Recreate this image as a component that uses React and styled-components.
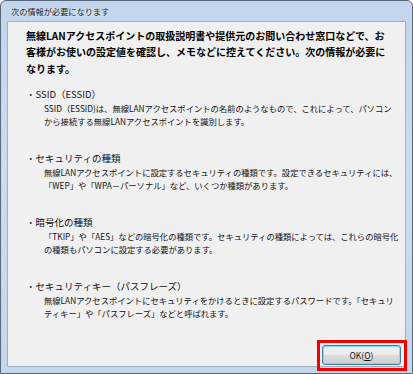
import React from "react";
import styled, { createGlobalStyle } from "styled-components";

const Global = createGlobalStyle`
  html, body {
    margin: 0;
    padding: 0;
    width: 413px;
    height: 374px;
    overflow: hidden;
    background: #ffffff;
    font-family: "Noto Sans CJK JP", "Noto Sans", sans-serif;
  }
`;

const Window = styled.div`
  box-sizing: border-box;
  width: 413px;
  height: 374px;
  border: 1px solid #56677c;
  border-radius: 6px 6px 0 0;
  background: linear-gradient(180deg, #c2d5ec 0%, #cddcee 45%, #c6d6ea 100%);
  display: flex;
  flex-direction: column;
  padding: 0 6px 6px 6px;
`;

const TitleBar = styled.div`
  height: 20px;
  display: flex;
  align-items: center;
  padding-left: 4px;
  font-size: 8.2px;
  color: #1a1a1a;
  text-shadow: 0 0 3px rgba(255, 255, 255, 0.9);
`;

const Panel = styled.div`
  flex: 1;
  box-sizing: border-box;
  border: 1px solid #a2b2c5;
  background: #f0f0f0;
  display: flex;
  flex-direction: column;
  padding: 5.5px 4px 1px 18px;
  color: #111;
`;

const Heading = styled.p`
  margin: 0 0 11px 0;
  font-size: 10px;
  font-weight: 700;
  line-height: 16.5px;
  white-space: nowrap;
  color: #000;
`;

const SectionList = styled.div`
  display: flex;
  flex-direction: column;
  gap: 25px;
`;

const Section = styled.section`
  display: flex;
  flex-direction: column;
`;

const SectionTitle = styled.div`
  display: flex;
  font-size: 9.5px;
  line-height: 13px;
  margin-bottom: 1px;
  white-space: nowrap;
  color: #111;
`;

const Bullet = styled.span`
  width: 9px;
  margin-right: 0.5px;
  color: #444;
`;

const Body = styled.p`
  margin: 0 0 0 18px;
  font-size: 8.3px;
  line-height: 12.5px;
  white-space: nowrap;
  color: #111;
`;

const Footer = styled.div`
  margin-top: auto;
  display: flex;
  justify-content: flex-end;
`;

const Highlight = styled.div`
  position: relative;
  display: flex;
  &::after {
    content: "";
    position: absolute;
    top: -5px;
    left: -5px;
    right: -6px;
    bottom: -6px;
    border: 3px solid #f20000;
    pointer-events: none;
  }
`;

const Button = styled.button`
  box-sizing: border-box;
  width: 79px;
  height: 20px;
  border: 1px solid #3c7fb1;
  border-radius: 3px;
  background: linear-gradient(180deg, #f2f2f2 0%, #ebebeb 48%, #dddddd 52%, #cfcfcf 100%);
  box-shadow: inset 0 0 0 1px #7fdcf8;
  font-family: "Noto Sans CJK JP", "Noto Sans", sans-serif;
  font-size: 8.5px;
  color: #111;
  padding: 0;
  display: flex;
  align-items: center;
  justify-content: center;
  cursor: default;
`;

const sections = [
  {
    title: "SSID（ESSID）",
    lines: [
      "SSID（ESSID)は、無線LANアクセスポイントの名前のようなもので、これによって、パソコン",
      "から接続する無線LANアクセスポイントを識別します。",
    ],
  },
  {
    title: "セキュリティの種類",
    lines: [
      "無線LANアクセスポイントに設定するセキュリティの種類です。設定できるセキュリティには、",
      "「WEP」や「WPA－パーソナル」など、いくつか種類があります。",
    ],
  },
  {
    title: "暗号化の種類",
    lines: [
      "「TKIP」や「AES」などの暗号化の種類です。セキュリティの種類によっては、これらの暗号化",
      "の種類もパソコンに設定する必要があります。",
    ],
  },
  {
    title: "セキュリティキー（パスフレーズ）",
    lines: [
      "無線LANアクセスポイントにセキュリティをかけるときに設定するパスワードです。「セキュリ",
      "ティキー」や「パスフレーズ」などと呼ばれます。",
    ],
  },
];

export default function App() {
  return (
    <>
      <Global />
      <Window>
        <TitleBar>次の情報が必要になります</TitleBar>
        <Panel>
          <Heading>
            無線LANアクセスポイントの取扱説明書や提供元のお問い合わせ窓口などで、お
            <br />
            客様がお使いの設定値を確認し、メモなどに控えてください。次の情報が必要に
            <br />
            なります。
          </Heading>
          <SectionList>
            {sections.map((s) => (
              <Section key={s.title}>
                <SectionTitle>
                  <Bullet>・</Bullet>
                  {s.title}
                </SectionTitle>
                <Body>
                  {s.lines[0]}
                  <br />
                  {s.lines[1]}
                </Body>
              </Section>
            ))}
          </SectionList>
          <Footer>
            <Highlight>
              <Button>
                OK(<u>O</u>)
              </Button>
            </Highlight>
          </Footer>
        </Panel>
      </Window>
    </>
  );
}
